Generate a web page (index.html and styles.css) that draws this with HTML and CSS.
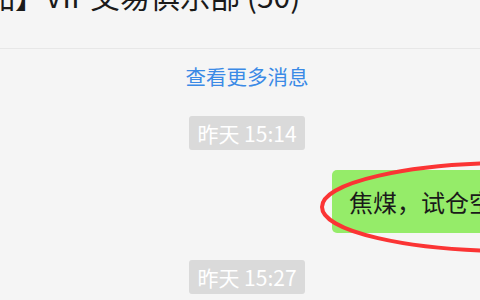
FILE: index.html
```html
<!DOCTYPE html>
<html lang="zh-CN">
<head>
    <meta charset="UTF-8">
    <meta name="viewport" content="width=device-width, initial-scale=1.0">
    <title>VIP交易俱乐部</title>
    <link rel="stylesheet" href="styles.css">
</head>
<body>
    <div class="chat">
        <!-- 群名称 -->
        <div class="header">
            <div class="title">品】VIP交易俱乐部 (50)</div>
        </div>

        <div class="messages">
            <div class="more">查看更多消息</div>

            <div class="time-row"><span class="time">昨天 15:14</span></div>

            <div class="msg-row mine">
                <div class="bubble">焦煤，试仓空单，止损参考前高</div>
            </div>

            <div class="time-row"><span class="time">昨天 15:27</span></div>
        </div>

        <!-- 红色圈注 -->
        <svg class="mark" width="480" height="300" viewBox="0 0 480 300">
            <ellipse cx="513" cy="207" rx="191" ry="44" fill="none" stroke="#fb3434" stroke-width="4"/>
        </svg>
    </div>
</body>
</html>
```

FILE: styles.css
```css
body {
    margin: 0;
    padding: 0;
    background-color: #f5f5f5;
    font-family: "Noto Sans CJK SC", "Noto Sans", sans-serif;
    color: #1a1a1a;
}

.chat {
    position: relative;
    width: 480px;
    height: 300px;
    overflow: hidden;
}

.header {
    height: 48px;
    border-bottom: 1px solid #e7e7e7;
    overflow: hidden;
}

.title {
    margin-top: -23px;
    margin-left: -15px;
    font-size: 30px;
    line-height: 36px;
    white-space: nowrap;
}

/* 消息区域（中心略偏右） */
.messages {
    padding-left: 14px;
}

.more {
    margin-top: 14px;
    height: 26px;
    line-height: 26px;
    text-align: center;
    font-size: 20.5px;
    color: #3b8ae6;
}

.time-row {
    margin-top: 27px;
    text-align: center;
}

.time {
    display: inline-block;
    height: 34px;
    line-height: 34px;
    padding: 0 8px;
    border-radius: 3px;
    background-color: #dadada;
    color: #fff;
    font-size: 21px;
}

.msg-row {
    margin-top: 20px;
    display: flex;
}

/* 自己发的消息 */
.mine {
    padding-left: 318px;
}

.bubble {
    height: 63px;
    line-height: 63px;
    padding: 0 17px;
    border-radius: 5px;
    background-color: #95ec69;
    font-size: 24px;
    white-space: nowrap;
}

.mark {
    position: absolute;
    left: 0;
    top: 0;
    pointer-events: none;
}
```
